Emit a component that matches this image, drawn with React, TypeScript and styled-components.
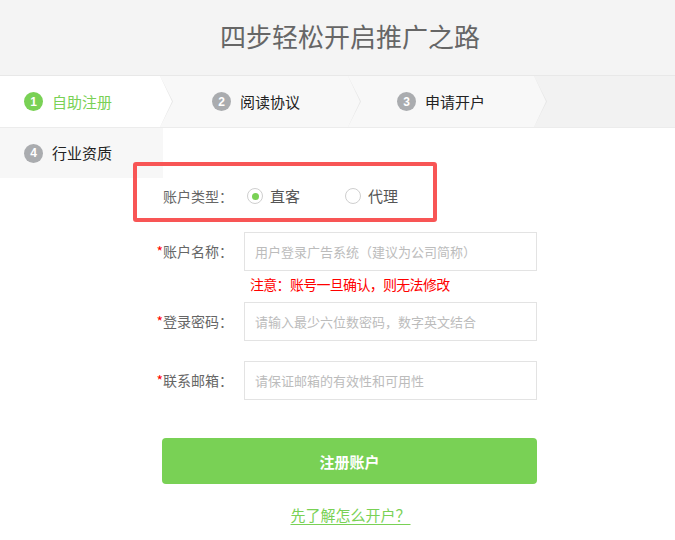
import React, { useState } from "react";
import styled, { createGlobalStyle } from "styled-components";

const GlobalStyle = createGlobalStyle`
  html, body {
    margin: 0;
    padding: 0;
    background: #fff;
    font-family: "Noto Sans CJK SC", "Noto Sans", "Liberation Sans", sans-serif;
  }
  * { box-sizing: border-box; }
`;

const green = "#79d155";

const Page = styled.div`
  width: 675px;
  min-height: 540px;
  background: #fff;
`;

const Header = styled.header`
  height: 75px;
  background: #f4f4f4;
  display: flex;
  align-items: center;
  justify-content: center;
  padding-left: 25px;
`;

const Title = styled.h1`
  margin: 0;
  font-size: 26px;
  font-weight: 400;
  line-height: 30px;
  color: #666;
  transform: translateY(-2px);
`;

const StepBar = styled.div`
  display: flex;
  height: 53px;
  background: #f2f2f2;
  border-top: 1px solid #e8e8e8;
  border-bottom: 1px solid #ececec;
`;

const Step = styled.div<{ $width: number; $pad: number; $bg: string; $z: number }>`
  position: relative;
  z-index: ${({ $z }) => $z};
  flex-shrink: 0;
  width: ${({ $width }) => $width}px;
  padding-left: ${({ $pad }) => $pad}px;
  background: ${({ $bg }) => $bg};
  display: flex;
  align-items: center;
  gap: 9px;

  &::before,
  &::after {
    content: "";
    position: absolute;
    top: 0;
    height: 100%;
    clip-path: polygon(0 0, 100% 50%, 0 100%);
  }
  &::before {
    right: -13px;
    width: 13px;
    background: #e6e6e6;
  }
  &::after {
    right: -12px;
    width: 12px;
    background: ${({ $bg }) => $bg};
  }
`;

const StepNum = styled.span<{ $active?: boolean }>`
  width: 19px;
  height: 19px;
  border-radius: 50%;
  background: ${({ $active }) => ($active ? green : "#aaacaf")};
  color: #fff;
  font-size: 12px;
  font-weight: 700;
  font-family: "Liberation Sans", sans-serif;
  display: flex;
  align-items: center;
  justify-content: center;
  flex-shrink: 0;
`;

const StepLabel = styled.span<{ $active?: boolean }>`
  font-size: 15px;
  line-height: 20px;
  color: ${({ $active }) => ($active ? green : "#222")};
`;

const Body = styled.div`
  display: flex;
  align-items: flex-start;
`;

const Aside = styled.div`
  width: 163px;
  flex-shrink: 0;
`;

const SideStep = styled.div`
  height: 50px;
  background: #f7f7f7;
  display: flex;
  align-items: center;
  gap: 9px;
  padding-left: 24px;
`;

const Form = styled.form`
  width: 375px;
  padding-top: 48px;
  display: flex;
  flex-direction: column;
`;

const Row = styled.div<{ $mt?: number }>`
  position: relative;
  display: flex;
  align-items: center;
  margin-top: ${({ $mt }) => $mt ?? 0}px;
`;

const Highlight = styled.div`
  position: absolute;
  left: -30px;
  top: -14px;
  width: 304px;
  height: 60px;
  border: 4px solid #f85555;
  border-radius: 3px;
  pointer-events: none;
`;

const Label = styled.label`
  width: 70px;
  flex-shrink: 0;
  display: flex;
  justify-content: flex-end;
  font-size: 14px;
  line-height: 40px;
  color: #666;
  white-space: nowrap;
`;

const Star = styled.span`
  color: #f00;
`;

const RadioGroup = styled.div`
  display: flex;
  align-items: center;
  margin-left: 14px;
  gap: 45px;
`;

const RadioOption = styled.span`
  display: flex;
  align-items: center;
  gap: 7px;
  font-size: 15px;
  line-height: 40px;
  color: #555;
  cursor: pointer;
`;

const RadioDot = styled.span<{ $checked: boolean }>`
  width: 16px;
  height: 16px;
  border-radius: 50%;
  border: 1px solid #cfcfcf;
  background: #fff;
  display: flex;
  align-items: center;
  justify-content: center;

  &::after {
    content: "";
    width: 7px;
    height: 7px;
    border-radius: 50%;
    background: ${({ $checked }) => ($checked ? green : "transparent")};
  }
`;

const Input = styled.input`
  margin-left: 11px;
  width: 293px;
  height: 39px;
  border: 1px solid #e3e3e3;
  padding: 0 10px;
  font-size: 13px;
  font-family: inherit;
  color: #333;
  outline: none;

  &::placeholder {
    color: #bcbcbc;
  }
`;

const Note = styled.div`
  margin: 4px 0 0 87px;
  font-size: 14px;
  line-height: 18px;
  letter-spacing: -0.7px;
  color: #f00;
`;

const SubmitButton = styled.button`
  margin-top: 38px;
  margin-left: -1px;
  width: 375px;
  height: 46px;
  border: none;
  border-radius: 4px;
  background: ${green};
  color: #fff;
  font-size: 15px;
  font-weight: 700;
  font-family: inherit;
  cursor: pointer;
`;

const HelpLink = styled.a`
  align-self: center;
  margin-top: 21px;
  font-size: 15px;
  line-height: 20px;
  color: ${green};
  text-decoration: underline;
  text-underline-offset: 3px;
  cursor: pointer;
`;

const steps = [
  { num: 1, label: "自助注册", width: 160, pad: 24, bg: "#fff", active: true },
  { num: 2, label: "阅读协议", width: 188, pad: 52, bg: "#f8f8f8" },
  { num: 3, label: "申请开户", width: 186, pad: 49, bg: "#f8f8f8" },
];

const fields = [
  { label: "账户名称：", placeholder: "用户登录广告系统（建议为公司简称）", mt: 15, note: "注意：账号一旦确认，则无法修改" },
  { label: "登录密码：", placeholder: "请输入最少六位数密码，数字英文结合", mt: 8, type: "password" },
  { label: "联系邮箱：", placeholder: "请保证邮箱的有效性和可用性", mt: 19 },
];

export default function App() {
  const [type, setType] = useState("direct");

  return (
    <Page>
      <GlobalStyle />
      <Header>
        <Title>四步轻松开启推广之路</Title>
      </Header>
      <StepBar>
        {steps.map((s, i) => (
          <Step key={s.num} $width={s.width} $pad={s.pad} $bg={s.bg} $z={steps.length - i}>
            <StepNum $active={s.active}>{s.num}</StepNum>
            <StepLabel $active={s.active}>{s.label}</StepLabel>
          </Step>
        ))}
      </StepBar>
      <Body>
        <Aside>
          <SideStep>
            <StepNum>4</StepNum>
            <StepLabel>行业资质</StepLabel>
          </SideStep>
        </Aside>
        <Form onSubmit={(e) => e.preventDefault()}>
          <Row>
            <Highlight />
            <Label>账户类型：</Label>
            <RadioGroup>
              <RadioOption onClick={() => setType("direct")}>
                <RadioDot $checked={type === "direct"} />
                直客
              </RadioOption>
              <RadioOption onClick={() => setType("agent")}>
                <RadioDot $checked={type === "agent"} />
                代理
              </RadioOption>
            </RadioGroup>
          </Row>
          {fields.map((f) => (
            <React.Fragment key={f.label}>
              <Row $mt={f.mt}>
                <Label>
                  <Star>*</Star>
                  {f.label}
                </Label>
                <Input type={f.type ?? "text"} placeholder={f.placeholder} />
              </Row>
              {f.note && <Note>{f.note}</Note>}
            </React.Fragment>
          ))}
          <SubmitButton type="submit">注册账户</SubmitButton>
          <HelpLink>先了解怎么开户？</HelpLink>
        </Form>
      </Body>
    </Page>
  );
}
